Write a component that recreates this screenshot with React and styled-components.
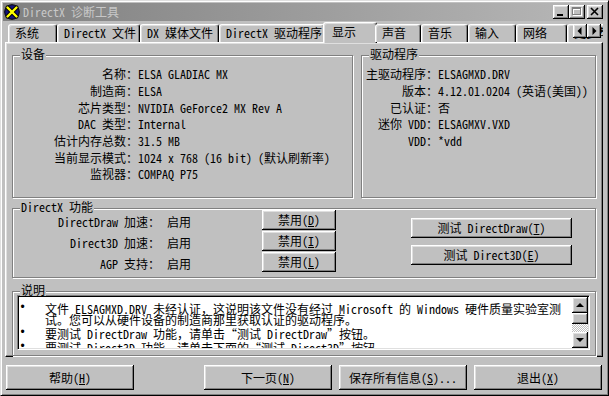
import React from "react";
import styled, { createGlobalStyle } from "styled-components";

const FONT = `"Noto Sans Mono CJK SC", "Noto Sans CJK SC", "Liberation Mono", monospace`;

const GlobalStyle = createGlobalStyle`
  html, body { margin: 0; padding: 0; background: #c0c0c0; }
  body { font-family: ${FONT}; font-size: 12px; color: #000; }
  * { box-sizing: border-box; }
`;

const raised = `
  background: #c0c0c0;
  box-shadow: inset -1px -1px #000, inset 1px 1px #fff, inset -2px -2px #808080, inset 2px 2px #dfdfdf;
`;

const Window = styled.div`
  width: 609px;
  height: 396px;
  background: #c0c0c0;
  border: 1px solid;
  border-color: #dfdfdf #000 #000 #dfdfdf;
  box-shadow: inset 1px 1px #fff, inset -1px -1px #808080;
  padding: 2px;
  display: flex;
  flex-direction: column;
  font-family: ${FONT};
  font-size: 12px;
  overflow: hidden;
`;

const TitleBar = styled.div`
  height: 18px;
  flex-shrink: 0;
  display: flex;
  align-items: center;
  padding: 0 3px 0 1px;
  background: linear-gradient(90deg, #808080 0%, #b8b8b8 100%);
`;

const TitleText = styled.div`
  flex: 1;
  margin-left: 3px;
  color: #c8c8c8;
  line-height: 18px;
  white-space: nowrap;
`;

const CaptionButton = styled.div`
  ${raised}
  width: 16px;
  height: 14px;
  margin-left: ${(p) => p.$gap || 0}px;
  display: flex;
  align-items: center;
  justify-content: center;
`;

const TabArea = styled.div`
  position: relative;
  margin: 1px 3px 0 2px;
  display: flex;
  flex-direction: column;
`;

const TabStrip = styled.div`
  position: relative;
  z-index: 1;
  height: 21px;
  display: flex;
  align-items: flex-end;
  padding-left: 3px;
  overflow: hidden;
`;

const Tab = styled.div`
  flex-shrink: 0;
  width: ${(p) => p.$w + (p.$active ? 4 : 0)}px;
  height: ${(p) => (p.$active ? 21 : 18)}px;
  margin: ${(p) => (p.$active ? "0 -2px 0 -2px" : "0 0 1px 0")};
  padding-left: ${(p) => (p.$active ? 8 : 6)}px;
  line-height: ${(p) => (p.$active ? 18 : 16)}px;
  background: #c0c0c0;
  border: 1px solid;
  border-bottom: none;
  border-color: #fff #000 transparent #fff;
  border-radius: 3px 3px 0 0;
  box-shadow: inset -1px 0 #808080, inset 1px 1px #dfdfdf;
  white-space: nowrap;
  overflow: hidden;
`;

const TabScroller = styled.div`
  position: absolute;
  z-index: 2;
  top: 2px;
  right: 2px;
  display: flex;
`;

const SmallButton = styled.div`
  ${raised}
  width: ${(p) => p.$w}px;
  height: ${(p) => p.$h}px;
  flex-shrink: 0;
  display: flex;
  align-items: center;
  justify-content: center;
`;

const Panel = styled.div`
  height: 315px;
  margin-top: -1px;
  border: 1px solid;
  border-color: #fff #000 #000 #fff;
  box-shadow: inset -1px -1px #808080, inset 1px 1px #dfdfdf;
  padding: 12px 6px 0 6px;
  display: flex;
  flex-direction: column;
`;

const TopRow = styled.div`
  display: flex;
  gap: 8px;
  height: 143px;
`;

const GroupBox = styled.div`
  position: relative;
  flex: ${(p) => (p.$w ? `0 0 ${p.$w}px` : "1 1 auto")};
  height: ${(p) => (p.$h ? `${p.$h}px` : "auto")};
  margin-top: ${(p) => p.$mt || 0}px;
  border: 1px solid #808080;
  box-shadow: 1px 1px 0 #fff, inset 1px 1px 0 #fff;
`;

const GroupTitle = styled.div`
  position: absolute;
  top: -8px;
  left: 7px;
  padding: 0 1px;
  line-height: 12px;
  background: #c0c0c0;
  white-space: nowrap;
`;

const InfoGrid = styled.div`
  display: grid;
  grid-template-columns: ${(p) => p.$labelW}px auto;
  grid-auto-rows: 16.67px;
  align-items: center;
  padding-top: 10px;
  white-space: nowrap;
  line-height: 14px;
`;

const InfoLabel = styled.div`
  text-align: right;
`;

const InfoValue = styled.div``;

const FeatureLayout = styled.div`
  display: flex;
  padding-top: 1px;
`;

const FeatureGrid = styled.div`
  display: grid;
  grid-template-columns: 147px 102px 74px;
  grid-auto-rows: 20px;
  row-gap: 1px;
  align-items: center;
  white-space: nowrap;
`;

const FeatureLabel = styled.div`
  text-align: right;
  padding-top: 2px;
`;

const FeatureValue = styled.div`
  padding-left: 7px;
  padding-top: 2px;
`;

const TestColumn = styled.div`
  margin-left: auto;
  margin-right: 23px;
  padding-top: 8px;
  display: flex;
  flex-direction: column;
  gap: 7px;
`;

const PushButton = styled.button`
  ${raised}
  border: none;
  margin: 0;
  padding: 0;
  font: inherit;
  color: #000;
  flex-shrink: 0;
  width: ${(p) => p.$w}px;
  height: ${(p) => p.$h}px;
  display: flex;
  align-items: center;
  justify-content: center;
  white-space: nowrap;
  line-height: 12px;
`;

const TextBox = styled.div`
  height: 55px;
  margin: 3px 5px 0 4px;
  display: flex;
  background: #fff;
  border: 1px solid;
  border-color: #808080 #fff #fff #808080;
  box-shadow: inset 1px 1px #000, inset -1px -1px #dfdfdf;
`;

const TextContent = styled.div`
  flex: 1;
  margin: 1px 0 1px 1px;
  padding-top: 6px;
  overflow: hidden;
  background: #fff;
`;

const Para = styled.div`
  display: flex;
  margin-bottom: 3px;
`;

const Bullet = styled.div`
  width: 26px;
  flex-shrink: 0;
  font-family: "Liberation Mono", monospace;
  line-height: 11px;
`;

const ParaLines = styled.div`
  display: flex;
  flex-direction: column;
`;

const Line = styled.div`
  line-height: 11px;
  white-space: nowrap;
`;

const ScrollBar = styled.div`
  width: 16px;
  margin: 1px 1px 1px 0;
  display: flex;
  flex-direction: column;
`;

const Track = styled.div`
  flex: 1;
  background: repeating-conic-gradient(#c0c0c0 0% 25%, #fff 0% 50%) 0 0 / 2px 2px;
`;

const Footer = styled.div`
  display: flex;
  margin-top: 8px;
  padding-left: 3px;
  gap: 7px;
`;

const Spacer = styled.div`
  width: 56px;
  flex-shrink: 0;
`;

const AppIcon = () => (
  <svg width="16" height="16" viewBox="0 0 16 16">
    <circle cx="8" cy="8" r="7.3" fill="#14147a" stroke="#000" strokeWidth="1" />
    <path d="M3.5 3.5 L12.5 12.5 M12.5 3.5 L3.5 12.5" stroke="#000" strokeWidth="4.2" strokeLinecap="round" />
    <path d="M3.5 3.5 L12.5 12.5 M12.5 3.5 L3.5 12.5" stroke="#ffff00" strokeWidth="2.4" strokeLinecap="round" />
    <circle cx="8" cy="8" r="1.4" fill="#ffff00" />
  </svg>
);

const MinGlyph = () => (
  <svg width="16" height="14" viewBox="0 0 16 14">
    <rect x="4" y="9" width="6" height="2" fill="#000" />
  </svg>
);

const MaxGlyph = () => (
  <svg width="16" height="14" viewBox="0 0 16 14">
    <g transform="translate(1,1)">
      <rect x="3.5" y="2.5" width="8" height="7" fill="none" stroke="#fff" />
      <rect x="3" y="2" width="9" height="2" fill="#fff" />
    </g>
    <rect x="3.5" y="2.5" width="8" height="7" fill="none" stroke="#808080" />
    <rect x="3" y="2" width="9" height="2" fill="#808080" />
  </svg>
);

const CloseGlyph = () => (
  <svg width="16" height="14" viewBox="0 0 16 14">
    <path d="M4 3 L11 10 M11 3 L4 10" stroke="#000" strokeWidth="1.6" />
  </svg>
);

const LeftArrow = () => (
  <svg width="14" height="14" viewBox="0 0 14 14">
    <polygon points="8.5,3 4.5,7 8.5,11" fill="#000" />
  </svg>
);

const RightArrow = () => (
  <svg width="14" height="14" viewBox="0 0 14 14">
    <polygon points="5.5,3 9.5,7 5.5,11" fill="#000" />
  </svg>
);

const UpArrow = () => (
  <svg width="16" height="16" viewBox="0 0 16 16">
    <polygon points="4,10 8,6 12,10" fill="#000" />
  </svg>
);

const DownArrow = () => (
  <svg width="16" height="16" viewBox="0 0 16 16">
    <polygon points="4,6 8,10 12,6" fill="#000" />
  </svg>
);

const TABS = [
  { label: "系统", w: 49 },
  { label: "DirectX 文件", w: 83 },
  { label: "DX 媒体文件", w: 79 },
  { label: "DirectX 驱动程序", w: 106 },
  { label: "显示", w: 50, active: true },
  { label: "声音", w: 46 },
  { label: "音乐", w: 47 },
  { label: "输入", w: 48 },
  { label: "网络", w: 51 },
  { label: "更多帮助", w: 70 },
];

const DEVICE = [
  ["名称：", "ELSA GLADIAC MX"],
  ["制造商：", "ELSA"],
  ["芯片类型：", "NVIDIA GeForce2 MX Rev A"],
  ["DAC 类型：", "Internal"],
  ["估计内存总数：", "31.5 MB"],
  ["当前显示模式：", "1024 x 768 (16 bit) (默认刷新率)"],
  ["监视器：", "COMPAQ P75"],
];

const DRIVER = [
  ["主驱动程序：", "ELSAGMXD.DRV"],
  ["版本：", "4.12.01.0204 (英语(美国))"],
  ["已认证：", "否"],
  ["迷你 VDD：", "ELSAGMXV.VXD"],
  ["VDD：", "*vdd"],
];

const FEATURES = [
  { label: "DirectDraw 加速：", key: "D" },
  { label: "Direct3D 加速：", key: "I" },
  { label: "AGP 支持：", key: "L" },
];

const NOTES = [
  [
    "文件 ELSAGMXD.DRV 未经认证，这说明该文件没有经过 Microsoft 的 Windows 硬件质量实验室测",
    "试。您可以从硬件设备的制造商那里获取认证的驱动程序。",
  ],
  ["要测试 DirectDraw 功能，请单击“测试 DirectDraw”按钮。"],
  ["要测试 Direct3D 功能，请单击下面的“测试 Direct3D”按钮。"],
];

export default function App() {
  return (
    <>
      <GlobalStyle />
      <Window lang="zh-CN">
        <TitleBar>
          <AppIcon />
          <TitleText>DirectX 诊断工具</TitleText>
          <CaptionButton>
            <MinGlyph />
          </CaptionButton>
          <CaptionButton>
            <MaxGlyph />
          </CaptionButton>
          <CaptionButton $gap={2}>
            <CloseGlyph />
          </CaptionButton>
        </TitleBar>

        <TabArea>
          <TabStrip>
            {TABS.map((t) => (
              <Tab key={t.label} $w={t.w} $active={t.active}>
                {t.label}
              </Tab>
            ))}
          </TabStrip>
          <TabScroller>
            <SmallButton $w={14} $h={14}>
              <LeftArrow />
            </SmallButton>
            <SmallButton $w={14} $h={14}>
              <RightArrow />
            </SmallButton>
          </TabScroller>

          <Panel>
            <TopRow>
              <GroupBox $w={341}>
                <GroupTitle>设备</GroupTitle>
                <InfoGrid $labelW={125}>
                  {DEVICE.map(([k, v]) => (
                    <React.Fragment key={k}>
                      <InfoLabel>{k}</InfoLabel>
                      <InfoValue>{v}</InfoValue>
                    </React.Fragment>
                  ))}
                </InfoGrid>
              </GroupBox>
              <GroupBox>
                <GroupTitle>驱动程序</GroupTitle>
                <InfoGrid $labelW={76}>
                  {DRIVER.map(([k, v]) => (
                    <React.Fragment key={k}>
                      <InfoLabel>{k}</InfoLabel>
                      <InfoValue>{v}</InfoValue>
                    </React.Fragment>
                  ))}
                </InfoGrid>
              </GroupBox>
            </TopRow>

            <GroupBox $h={67} $mt={10}>
              <GroupTitle>DirectX 功能</GroupTitle>
              <FeatureLayout>
                <FeatureGrid>
                  {FEATURES.map((f) => (
                    <React.Fragment key={f.key}>
                      <FeatureLabel>{f.label}</FeatureLabel>
                      <FeatureValue>启用</FeatureValue>
                      <PushButton $w={74} $h={20}>
                        禁用(<u>{f.key}</u>)
                      </PushButton>
                    </React.Fragment>
                  ))}
                </FeatureGrid>
                <TestColumn>
                  <PushButton $w={161} $h={20}>
                    测试 DirectDraw(<u>T</u>)
                  </PushButton>
                  <PushButton $w={161} $h={20}>
                    测试 Direct3D(<u>E</u>)
                  </PushButton>
                </TestColumn>
              </FeatureLayout>
            </GroupBox>

            <GroupBox $h={62} $mt={13}>
              <GroupTitle>说明</GroupTitle>
              <TextBox>
                <TextContent>
                  {NOTES.map((lines, i) => (
                    <Para key={i}>
                      <Bullet>•</Bullet>
                      <ParaLines>
                        {lines.map((l) => (
                          <Line key={l}>{l}</Line>
                        ))}
                      </ParaLines>
                    </Para>
                  ))}
                </TextContent>
                <ScrollBar>
                  <SmallButton $w={16} $h={16}>
                    <UpArrow />
                  </SmallButton>
                  <SmallButton $w={16} $h={11} />
                  <Track />
                  <SmallButton $w={16} $h={16}>
                    <DownArrow />
                  </SmallButton>
                </ScrollBar>
              </TextBox>
            </GroupBox>
          </Panel>
        </TabArea>

        <Footer>
          <PushButton $w={128} $h={25}>
            帮助(<u>H</u>)
          </PushButton>
          <Spacer />
          <PushButton $w={128} $h={25}>
            下一页(<u>N</u>)
          </PushButton>
          <PushButton $w={128} $h={25}>
            保存所有信息(<u>S</u>)...
          </PushButton>
          <PushButton $w={128} $h={25}>
            退出(<u>X</u>)
          </PushButton>
        </Footer>
      </Window>
    </>
  );
}
